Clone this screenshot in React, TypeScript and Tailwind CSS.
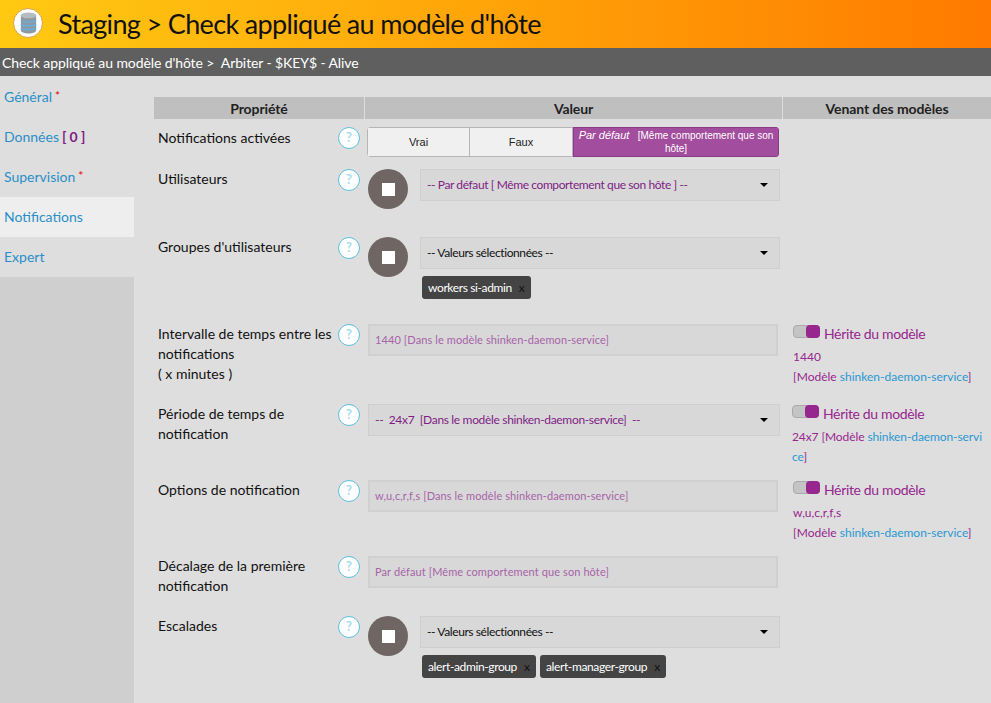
import React from "react";

const labelCls = "w-[184px] shrink-0 pl-1 text-[14px] leading-[20px] text-[#111]";

function Help() {
  return (
    <div className="w-[22px] h-[22px] shrink-0 rounded-full bg-white border border-[#5bc0de] flex items-center justify-center text-[13px] font-bold text-[#a9dcec]">
      ?
    </div>
  );
}

function StopBtn() {
  return (
    <div className="w-10 h-10 shrink-0 rounded-full bg-[#6f6663] flex items-center justify-center">
      <div className="w-[13px] h-[13px] bg-white" />
    </div>
  );
}

function Caret() {
  return <div className="w-0 h-0 border-x-[4px] border-x-transparent border-t-[4px] border-t-black" />;
}

function SelectBox({ text, purple }: { text: string; purple?: boolean }) {
  return (
    <div className="h-8 w-[360px] bg-[#d8d8d8] border border-[#cfcfcf] flex items-center justify-between pl-[6px] pr-[11px]">
      <span className={`text-[12px] tracking-[-0.4px] ${purple ? "text-[#7f1d85]" : "text-[#111]"}`}>{text}</span>
      <Caret />
    </div>
  );
}

function Tag({ text }: { text: string }) {
  return (
    <div className="h-[23px] flex items-center gap-[7px] px-[6px] rounded-[3px] bg-[#444] text-[12px] text-white">
      <span className="tracking-[-0.38px]">{text}</span>
      <span className="text-[#111]">x</span>
    </div>
  );
}

function DisabledInput({ text }: { text: string }) {
  return (
    <div className="ml-[4px] h-8 w-[410px] bg-[#d8d8d8] border-2 border-[#d0d0d0] flex items-center px-[5px] text-[11px] tracking-[0.1px] text-[#a763a8]">
      {text}
    </div>
  );
}

function Inherit() {
  return (
    <div className="flex items-center gap-[4px] h-5">
      <div className="relative -mt-[5px] w-[27px] h-[13px] rounded-[4px] bg-[#c4c4c4] border border-[#aaa]">
        <div className="absolute right-[-1px] top-[-1px] w-[14px] h-[13px] rounded-[4px] bg-[#97268f]" />
      </div>
      <span className="text-[14px] tracking-[-0.35px] text-[#97268f]">Hérite du modèle</span>
    </div>
  );
}

function Model() {
  return (
    <span className="text-[#97268f]">
      [Modèle <span className="text-[#2a98d4]">shinken-daemon-service</span>]
    </span>
  );
}

function Row({
  label,
  height,
  children,
  side,
}: {
  label: React.ReactNode;
  height: string;
  children: React.ReactNode;
  side?: React.ReactNode;
}) {
  return (
    <div className={`flex ${height}`}>
      <div className={labelCls}>{label}</div>
      <div className="w-[26px] shrink-0">
        <Help />
      </div>
      <div className="w-[419px] shrink-0">{children}</div>
      <div className="flex-1 min-w-0 text-[12px]">{side}</div>
    </div>
  );
}

export default function App() {
  return (
    <div className="w-[991px] h-[703px] overflow-hidden bg-[#dedede] font-['Lato',sans-serif]">
      {/* Header */}
      <div className="h-12 bg-gradient-to-r from-[#ffc912] to-[#ff7a00] flex items-center pl-[13px] gap-[15px]">
        <div className="w-[30px] h-[30px] -mt-[2px] rounded-full bg-white border border-[#d9a04a] flex items-center justify-center">
          <svg viewBox="0 0 20 26" className="w-[17px] h-[22px]">
            <path d="M1 4v18c0 2 4 3.500 9 3.500s9-1.500 9-3.500V4z" fill="#8f999f" />
            <ellipse cx="10" cy="4" rx="9" ry="3.500" fill="#b4bcc1" />
            <path d="M1 10c2 2.500 16 2.500 18 0M1 14.500c2 2.500 16 2.500 18 0M1 19c2 2.500 16 2.500 18 0" stroke="#5db2ea" strokeWidth="1.500" fill="none" />
          </svg>
        </div>
        <h1 className="text-[27px] tracking-[-0.65px] text-[#111]">Staging &gt; Check appliqué au modèle d'hôte</h1>
      </div>

      {/* Breadcrumb */}
      <div className="h-[28px] bg-[#5f5f5f] flex items-center pl-[2px] text-[14px] tracking-[-0.1px] text-white whitespace-pre">
        Check appliqué au modèle d'hôte &gt;  Arbiter - $KEY$ - Alive
      </div>

      <div className="flex pt-px">
        {/* Sidebar */}
        <div className="w-[134px] h-[626px] shrink-0 bg-[#cfcfcf]">
          <div className="h-[200px] bg-[#dedede] text-[14px] text-[#2a8fc9]">
            <div className="h-10 flex items-center pl-1 pb-[2px]">
              Général <span className="ml-[3px] text-red-600 text-[12px]">*</span>
            </div>
            <div className="h-10 flex items-center pl-1 pb-[2px]">
              Données <span className="ml-[3px] font-bold tracking-[-0.1px] text-[#7f1d85]">[ 0 ]</span>
            </div>
            <div className="h-10 flex items-center pl-1 pb-[2px]">
              Supervision <span className="ml-[3px] text-red-600 text-[12px]">*</span>
            </div>
            <div className="h-10 flex items-center pl-1 pb-[2px] bg-[#eee]">Notifications</div>
            <div className="h-10 flex items-center pl-1 pb-[2px] bg-[#dedede]">Expert</div>
          </div>
        </div>

        {/* Table */}
        <div className="flex-1 pl-5 pt-[20px]">
          <div className="flex gap-px h-[22px] text-[14px] font-bold tracking-[-0.1px] text-[#222] bg-[#dedede]">
            <div className="w-[210px] bg-[#bfbfbf] flex items-center justify-center">Propriété</div>
            <div className="w-[417px] bg-[#bfbfbf] flex items-center justify-center">Valeur</div>
            <div className="flex-1 bg-[#bfbfbf] flex items-center justify-center">Venant des modèles</div>
          </div>

          <div className="pt-2">
            <Row label={<div className="pt-px">Notifications activées</div>} height="h-[42px]">
              <div className="ml-[3px] w-[412px] h-[30px] flex rounded-[4px] overflow-hidden text-[11px] text-[#222] font-['Liberation_Sans',sans-serif]">
                <div className="w-[103px] bg-[#f0f0f0] border border-[#b5b5b5] flex items-center justify-center">Vrai</div>
                <div className="w-[103px] bg-[#f0f0f0] border-y border-r border-[#b5b5b5] flex items-center justify-center">Faux</div>
                <div className="flex-1 bg-[#a34d9e] border border-[#8a3a86] text-white text-[10px] leading-[13px] text-center px-1 pt-[1px]">
                  <i className="text-[11px]">Par défaut</i>&nbsp;&nbsp;&nbsp;[Même comportement que son hôte]
                </div>
              </div>
            </Row>
            <Row label="Utilisateurs" height="h-[68px]">
              <div className="flex gap-3 ml-[4px]">
                <StopBtn />
                <SelectBox text="-- Par défaut [ Même comportement que son hôte ] --" purple />
              </div>
            </Row>
            <Row label="Groupes d'utilisateurs" height="h-[87px]">
              <div className="flex gap-3 ml-[4px]">
                <StopBtn />
                <div>
                  <SelectBox text="-- Valeurs sélectionnées --" />
                  <div className="mt-[7px] ml-[2px] flex gap-[4px]">
                    <Tag text="workers si-admin" />
                  </div>
                </div>
              </div>
            </Row>
            <Row
              label={
                <>
                  Intervalle de temps entre les notifications
                  <br />( x minutes )
                </>
              }
              height="h-[80px]"
              side={
                <div className="pl-[10px] leading-[20px]">
                  <Inherit />
                  <div className="text-[#97268f] mt-[3px]">1440</div>
                  <div><Model /></div>
                </div>
              }
            >
              <DisabledInput text="1440 [Dans le modèle shinken-daemon-service]" />
            </Row>
            <Row
              label="Période de temps de notification"
              height="h-[76px]"
              side={
                <div className="pl-[9px] leading-[20px]">
                  <Inherit />
                  <div className="mt-[3px] break-all w-[192px] tracking-[-0.1px]">
                    <span className="text-[#97268f]">24x7 </span>
                    <Model />
                  </div>
                </div>
              }
            >
              <div className="ml-[4px] h-8 w-[412px] bg-[#d8d8d8] border border-[#cfcfcf] flex items-center justify-between pl-[6px] pr-[11px]">
                <span className="text-[12px] tracking-[-0.33px] text-[#7f1d85] whitespace-pre">--  24x7  [Dans le modèle shinken-daemon-service]  --</span>
                <Caret />
              </div>
            </Row>
            <Row
              label="Options de notification"
              height="h-[76px]"
              side={
                <div className="pl-[10px] leading-[20px]">
                  <Inherit />
                  <div className="text-[#97268f] mt-[3px]">w,u,c,r,f,s</div>
                  <div><Model /></div>
                </div>
              }
            >
              <DisabledInput text="w,u,c,r,f,s [Dans le modèle shinken-daemon-service]" />
            </Row>
            <Row label="Décalage de la première notification" height="h-[60px]">
              <DisabledInput text="Par défaut [Même comportement que son hôte]" />
            </Row>
            <Row label="Escalades" height="h-[70px]">
              <div className="flex gap-3 ml-[4px]">
                <StopBtn />
                <div>
                  <SelectBox text="-- Valeurs sélectionnées --" />
                  <div className="mt-[7px] ml-[2px] flex gap-[4px]">
                    <Tag text="alert-admin-group" />
                    <Tag text="alert-manager-group" />
                  </div>
                </div>
              </div>
            </Row>
          </div>
        </div>
      </div>
    </div>
  );
}
